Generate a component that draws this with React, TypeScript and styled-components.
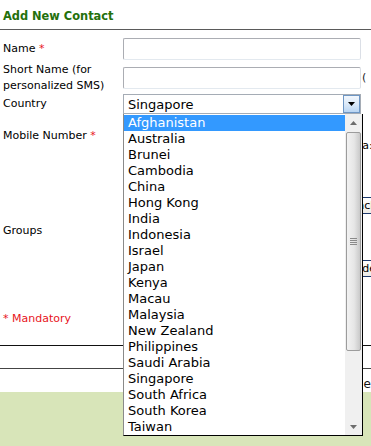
import React from 'react';
import styled, {createGlobalStyle} from "styled-components";

const countries = [
    'Afghanistan', 'Australia', 'Brunei', 'Cambodia', 'China', 'Hong Kong', 'India',
    'Indonesia', 'Israel', 'Japan', 'Kenya', 'Macau', 'Malaysia', 'New Zealand',
    'Philippines', 'Saudi Arabia', 'Singapore', 'South Africa', 'South Korea', 'Taiwan'
]

const App = () => {
    return (
        <Page>
            <GlobalStyle/>
            <Title>Add New Contact</Title>

            <Form>
                <Row height={25}>
                    <Label>Name <Req>*</Req></Label>
                    <TextInput/>
                    <Hint/>
                </Row>
                <Row height={33}>
                    <Label>Short Name (for<br/>personalized SMS)</Label>
                    <TextInput/>
                    <Hint>(&emsp;optional)</Hint>
                </Row>
                <Row height={20}>
                    <Label>Country</Label>
                    <Select>
                        <span>Singapore</span>
                        <ArrowButton>
                            <svg width="7" height="4" viewBox="0 0 7 4">
                                <path d="M0 0h7L3.5 4z" fill="#000"/>
                            </svg>
                        </ArrowButton>
                    </Select>
                    <Hint/>
                </Row>
                <Row height={44}>
                    <Label>Mobile Number <Req>*</Req></Label>
                    <Inline>
                        <TextInput width={60}/>
                        <TextInput width={130}/>
                        <Note>Malaysia: 60123456789</Note>
                    </Inline>
                    <Hint/>
                </Row>
                <Row height={146}>
                    <Label>Groups</Label>
                    <Inline>
                        <GroupList/>
                        <ButtonStack>
                            <SmallButton indent={40}>Include</SmallButton>
                            <SmallButton indent={19}>Exclude</SmallButton>
                        </ButtonStack>
                    </Inline>
                    <Hint/>
                </Row>
                <Row height={28}>
                    <Mandatory>* Mandatory</Mandatory>
                    <div/>
                    <Hint/>
                </Row>
            </Form>

            <Divider/>
            <Actions>
                <LinkText>Save</LinkText>
                <LinkText>Cancel</LinkText>
            </Actions>
            <Footer/>

            <Dropdown>
                <Options>
                    {countries.map((c, i) => (
                        <Option key={c} selected={i === 0}>{c}</Option>
                    ))}
                </Options>
                <Scrollbar>
                    <ScrollArrow>
                        <svg width="7" height="4" viewBox="0 0 7 4">
                            <path d="M0 4h7L3.5 0z" fill="#6d6d6d"/>
                        </svg>
                    </ScrollArrow>
                    <Thumb>
                        <svg width="7" height="7" viewBox="0 0 7 7">
                            <path d="M0 .5h7M0 2.5h7M0 4.5h7M0 6.5h7" stroke="#8a8a8a"/>
                        </svg>
                    </Thumb>
                    <Track/>
                    <ScrollArrow>
                        <svg width="7" height="4" viewBox="0 0 7 4">
                            <path d="M0 0h7L3.5 4z" fill="#6d6d6d"/>
                        </svg>
                    </ScrollArrow>
                </Scrollbar>
            </Dropdown>
        </Page>
    );
};

const GlobalStyle = createGlobalStyle`
  html, body {
    margin: 0;
    padding: 0;
    overflow: hidden;
    background: #fff;
  }
`

const Page = styled.div`
  position: relative;
  width: 640px;
  height: 446px;
  font-family: "DejaVu Sans", Verdana, sans-serif;
  font-size: 11px;
  color: #000;
  display: flex;
  flex-direction: column;
`

const Title = styled.h2`
  margin: 0;
  padding: 9px 3px 6px;
  font-size: 11.4px;
  line-height: 14px;
  font-weight: 700;
  color: #24700c;
  border-bottom: 1px solid #5a5a5a;
`

const Form = styled.div`
  display: flex;
  flex-direction: column;
  padding-top: 6px;
`

const Row = styled.div<{height: number}>`
  display: grid;
  grid-template-columns: 123px 238px 1fr;
  align-items: center;
  height: ${p => p.height}px;
`

const Label = styled.div`
  padding-left: 3px;
  line-height: 16px;
  white-space: nowrap;
`

const Req = styled.span`
  color: #e8141c;
`

const Mandatory = styled.div`
  padding-left: 3px;
  color: #e8141c;
  white-space: nowrap;
`

const TextInput = styled.div<{width?: number}>`
  box-sizing: border-box;
  width: ${p => p.width ? `${p.width}px` : '100%'};
  flex-shrink: 0;
  height: 22px;
  background: #fff;
  border: 1px solid #abadb3;
  border-right-color: #dbdfe6;
  border-bottom-color: #e3e9ef;
  border-radius: 2px;
`

const Hint = styled.div`
  padding-left: 1px;
  color: #222;
  white-space: nowrap;
`

const Inline = styled.div`
  display: flex;
  align-items: flex-start;
  gap: 4px;
  white-space: nowrap;
`

const Note = styled.span`
  align-self: flex-end;
  padding-top: 20px;
  line-height: 16px;
`

const GroupList = styled.div`
  width: 180px;
  height: 130px;
  flex-shrink: 0;
  border: 1px solid #7f9db9;
`

const ButtonStack = styled.div`
  display: flex;
  flex-direction: column;
  align-items: flex-start;
  gap: 46px;
  padding-top: 32px;
`

const SmallButton = styled.div<{indent: number}>`
  margin-left: ${p => p.indent}px;
  height: 15px;
  padding: 0 4px;
  font-size: 11px;
  line-height: 15px;
  border: 1px solid #1e3a6e;
  border-radius: 2px;
  background: linear-gradient(#ffffff, #ecebe6);
`

const Select = styled.div`
  box-sizing: border-box;
  height: 20px;
  display: flex;
  align-items: center;
  justify-content: space-between;
  border: 1px solid #a5acb5;
  padding-left: 4px;
  font-size: 13px;
  background: #fff;
`

const ArrowButton = styled.div`
  box-sizing: border-box;
  width: 17px;
  height: 18px;
  display: flex;
  align-items: center;
  justify-content: center;
  border: 1px solid #6e96c4;
  background: linear-gradient(#f2f7fd 0%, #d9e8f8 55%, #b9d5f3 100%);
`

const Divider = styled.div`
  margin-top: 13px;
  height: 22px;
  border-top: 1px solid #111;
  border-bottom: 1px solid #444;
`

const Actions = styled.div`
  height: 23px;
  display: flex;
  align-items: flex-end;
  gap: 10px;
  padding-left: 294px;
`

const LinkText = styled.span`
  font-size: 12px;
  line-height: 16px;
  color: #111;
`

const Footer = styled.div`
  flex: 1;
  background: #d8e5b9;
`

const Dropdown = styled.div`
  position: absolute;
  left: 123px;
  top: 114px;
  width: 238px;
  height: 320px;
  display: flex;
  background: #fff;
  border: 1px solid #000;
  border-left-color: #8a8a8a;
  border-top: none;
  padding-top: 1px;
`

const Options = styled.div`
  flex: 1;
  display: flex;
  flex-direction: column;
`

const Option = styled.div<{selected: boolean}>`
  height: 16px;
  line-height: 16px;
  padding-left: 4px;
  font-size: 13px;
  white-space: nowrap;
  color: ${p => p.selected ? '#fff' : '#000'};
  background: ${p => p.selected ? '#3399ff' : 'transparent'};
`

const Scrollbar = styled.div`
  width: 17px;
  display: flex;
  flex-direction: column;
  background: #f0f0f0;
  margin-top: -1px;
`

const ScrollArrow = styled.div`
  height: 17px;
  display: flex;
  align-items: center;
  justify-content: center;
`

const Thumb = styled.div`
  box-sizing: border-box;
  height: 219px;
  margin: 1px 0 0 1px;
  width: 15px;
  display: flex;
  align-items: center;
  justify-content: center;
  border: 1px solid #9c9c9c;
  border-radius: 2px;
  background: linear-gradient(90deg, #f2f2f2 0%, #e6e6e6 55%, #c9c9c9 100%);
`

const Track = styled.div`
  flex: 1;
`

export default App;
